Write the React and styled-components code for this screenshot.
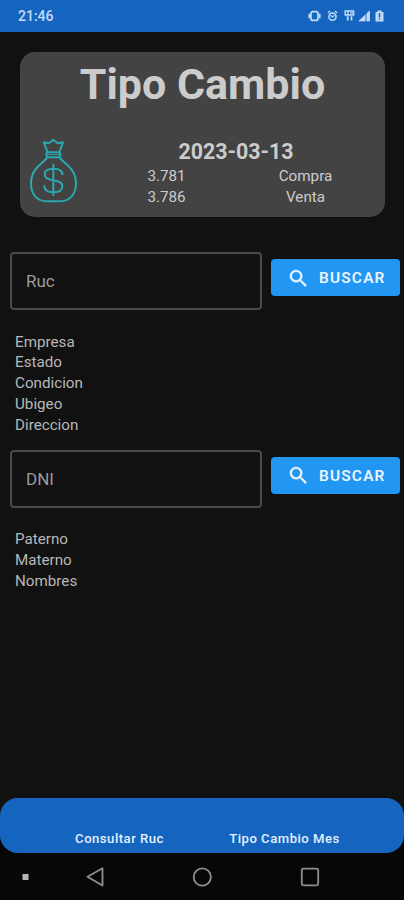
import React from "react"
import styled, { createGlobalStyle } from "styled-components"

const GlobalStyle = createGlobalStyle`
  * {
    box-sizing: border-box;
  }
  body {
    margin: 0;
    background: #111111;
    font-family: Roboto, "Liberation Sans", sans-serif;
  }
`

const Screen = styled.div`
  display: flex;
  flex-direction: column;
  width: 404px;
  height: 900px;
  overflow: hidden;
  background: #111111;
`

const StatusBar = styled.header`
  display: flex;
  align-items: center;
  justify-content: space-between;
  height: 32px;
  padding: 0 19px 0 18px;
  background: #1565c0;
  color: #c3dbf5;
`

const Clock = styled.span`
  font-size: 14px;
  font-weight: 500;
`

const Card = styled.section`
  height: 165px;
  margin: 20px 19px 0 20px;
  padding: 0 10px;
  border-radius: 15px;
  background: #434343;
  color: #cccccc;
`

const Title = styled.h1`
  margin: 0;
  padding-top: 7px;
  font-size: 43px;
  line-height: 50px;
  font-weight: 700;
  text-align: center;
  white-space: nowrap;
`

const CardBody = styled.div`
  display: flex;
  gap: 20px;
  padding-top: 29px;
`

const Rates = styled.div`
  flex: 1;
`

const RateDate = styled.div`
  font-size: 21.4px;
  line-height: 28px;
  font-weight: 700;
  text-align: center;
`

const RateRow = styled.div`
  display: grid;
  grid-template-columns: 1fr 1fr;
  font-size: 15.2px;
  line-height: 21px;
  text-align: center;
`

const Content = styled.main`
  flex: 1;
  padding-top: 35px;
`

const Search = styled.div`
  display: flex;
  align-items: flex-start;
  gap: 9px;
  height: 58px;
  padding: 0 4px 0 10px;
`

const Field = styled.div`
  display: flex;
  align-items: center;
  width: 252px;
  height: 58px;
  padding-left: 14px;
  border: 2px solid #4b4b4b;
  border-radius: 4px;
  color: #9b9b9b;
  font-size: 17px;
`

const Button = styled.button`
  display: flex;
  align-items: center;
  width: 129px;
  height: 37px;
  margin-top: 7px;
  padding: 1px 0 0 16px;
  border: 0;
  border-radius: 4px;
  background: #2196f3;
  color: #edf6ff;
  font-family: inherit;
  font-size: 15.4px;
  font-weight: 600;
  letter-spacing: 1.2px;

  svg {
    margin-right: 9px;
  }
`

const Labels = styled.ul`
  margin: 0;
  padding: 21.5px 15px ${props => props.$bottom || 0}px;
  list-style: none;
  color: #b8b8b8;
  font-size: 15.2px;
  line-height: 20.8px;
`

const BottomBar = styled.nav`
  display: flex;
  align-items: flex-end;
  height: 55px;
  padding: 0 37px 6px;
  border-radius: 18px;
  background: #1565c0;
`

const BottomItem = styled.a`
  flex: 1;
  color: #e3effc;
  font-size: 13.1px;
  line-height: 17px;
  font-weight: 500;
  letter-spacing: 0.5px;
  text-align: center;
`

const Footer = styled.div`
  background: linear-gradient(#111111 0 20px, #070707 20px);
`

const SystemBar = styled.div`
  height: 47px;
`

const StatusIcons = () => (
  <svg width="78" height="16" viewBox="0 0 78 16" fill="none" stroke="currentColor">
    <rect x="4" y="3.6" width="7" height="8.8" rx="2" strokeWidth="1.7" />
    <path d="M2.2 5.8v4.4M12.8 5.8v4.4" strokeWidth="1.6" />
    <circle cx="25.5" cy="8.6" r="3.6" strokeWidth="1.5" />
    <path d="M20.8 5l2.3-1.9M30.2 5l-2.3-1.9M23.5 7.2l2 1.7 2-1.7" strokeWidth="1.3" />
    <path d="M38.2 3h8.4v4h-8.4zM41 3.2v3.6M43.2 4.9h3" strokeWidth="1.4" />
    <path d="M40.7 8.3v4.2M44.5 8.3v4.2" strokeWidth="1.7" />
    <path d="M51.3 13.2L62.8 2.5v10.7z" fill="currentColor" fillOpacity=".55" stroke="none" />
    <path d="M51.3 13.2L58 7v6.2zM60 5v8.2h2.8V2.5z" fill="currentColor" stroke="none" />
    <path d="M68.5 4h2V2.5h4V4h2v9.5h-8z" fill="currentColor" stroke="none" />
    <path d="M72.5 5v4.5M72.5 10.5v1.3" stroke="#1565c0" strokeWidth="1.5" />
  </svg>
)

const MoneyBag = () => (
  <svg width="47" height="65" viewBox="60 54 141 195" fill="none" stroke="#2ba7ae" strokeWidth="6" strokeLinecap="round" strokeLinejoin="round">
    <path d="M113 96L101 67L117 70L130 59L143 70L159 67L148 96" />
    <rect x="109" y="97" width="42" height="15" rx="7" />
    <path d="M111 104H149" strokeWidth="3" />
    <path d="M112 112C103 128 63 142 63 190C63 226 84 244 113 244H148C177 244 198 226 198 190C198 142 157 128 148 112" />
    <path d="M157 163C157 151 145 146 130 146C115 146 104 151 104 163C104 175 114 179 130 181C146 183 157 187 157 199C157 211 146 217 130 217C114 217 103 211 103 198M130 134V226" />
  </svg>
)

const SearchIcon = () => (
  <svg width="23" height="23" viewBox="0 0 24 24" fill="currentColor" stroke="currentColor" strokeWidth="0.4">
    <path d="M15.5 14h-.79l-.28-.27A6.471 6.471 0 0 0 16 9.5 6.5 6.5 0 1 0 9.5 16c1.61 0 3.09-.59 4.23-1.57l.27.28v.79l5 4.99L20.49 19l-4.99-5zm-6 0C7.01 14 5 11.99 5 9.5S7.01 5 9.5 5 14 7.01 14 9.5 11.99 14 9.5 14z" />
  </svg>
)

const SystemIcons = () => (
  <svg width="404" height="47" viewBox="0 0 404 47" fill="none" stroke="#8f8f8f" strokeWidth="1.8" strokeLinejoin="round">
    <rect x="22.5" y="21" width="6" height="6" fill="#b5b5b5" stroke="none" />
    <path d="M87.5 23.7L102.5 15.2V32.5z" />
    <circle cx="202.3" cy="24" r="8.6" />
    <rect x="301.8" y="15.7" width="16.4" height="16.6" rx="1.5" />
  </svg>
)

const SearchRow = ({ label }) => (
  <Search>
    <Field>{label}</Field>
    <Button>
      <SearchIcon />
      BUSCAR
    </Button>
  </Search>
)

const rates = [
  { value: "3.781", name: "Compra" },
  { value: "3.786", name: "Venta" },
]

const rucLabels = ["Empresa", "Estado", "Condicion", "Ubigeo", "Direccion"]
const dniLabels = ["Paterno", "Materno", "Nombres"]

export default function App() {
  return (
    <Screen>
      <GlobalStyle />
      <StatusBar>
        <Clock>21:46</Clock>
        <StatusIcons />
      </StatusBar>
      <Card>
        <Title>Tipo Cambio</Title>
        <CardBody>
          <MoneyBag />
          <Rates>
            <RateDate>2023-03-13</RateDate>
            {rates.map(rate => (
              <RateRow key={rate.name}>
                <span>{rate.value}</span>
                <span>{rate.name}</span>
              </RateRow>
            ))}
          </Rates>
        </CardBody>
      </Card>
      <Content>
        <SearchRow label="Ruc" />
        <Labels $bottom={14.5}>
          {rucLabels.map(label => <li key={label}>{label}</li>)}
        </Labels>
        <SearchRow label="DNI" />
        <Labels>
          {dniLabels.map(label => <li key={label}>{label}</li>)}
        </Labels>
      </Content>
      <Footer>
        <BottomBar>
          <BottomItem>Consultar Ruc</BottomItem>
          <BottomItem>Tipo Cambio Mes</BottomItem>
        </BottomBar>
        <SystemBar>
          <SystemIcons />
        </SystemBar>
      </Footer>
    </Screen>
  )
}
